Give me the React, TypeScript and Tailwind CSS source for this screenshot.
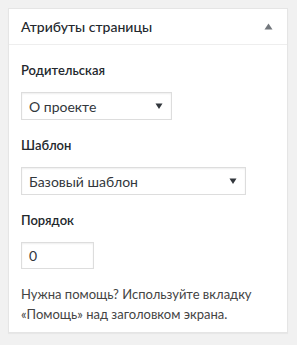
import { useState } from "react";

function FakeSelect({ value, width }: { value: string; width: string }) {
  return (
    <div
      className={`${width} h-[28px] flex items-center justify-between border border-[#ddd] bg-white pl-[7px] pr-[8px] text-[14px] text-[#32373c] shadow-[inset_0_1px_2px_rgba(0,0,0,0.07)]`}
    >
      <span>{value}</span>
      <svg width="8" height="8" viewBox="0 0 8 8" className="text-[#32373c]">
        <path d="M0.5 1.5 L7.5 1.5 L4 7 Z" fill="currentColor" />
      </svg>
    </div>
  );
}

export default function App() {
  const [open] = useState(true);

  return (
    <div className="w-[297px] h-[345px] bg-[#f1f1f1] pt-2 pl-2 pr-[9px] font-['Lato',sans-serif]">
      <div className="h-[325px] bg-white border border-[#e5e5e5] shadow-[0_1px_1px_rgba(0,0,0,0.04)]">
        <div className="h-[36px] flex items-center justify-between px-3 border-b border-[#eee]">
          <h2 className="text-[14px] text-[#23282d] font-medium">Атрибуты страницы</h2>
          <svg width="9" height="7" viewBox="0 0 9 7" className="text-[#72777c] mr-[2px]">
            <path d="M4.5 0.5 L8.5 6.5 L0.5 6.5 Z" fill="currentColor" />
          </svg>
        </div>
        {open && (
          <div className="px-3 pt-[15px] text-[13px] text-[#444]">
            <p className="h-[20px] leading-[20px] font-semibold text-[#23282d]">Родительская</p>
            <div className="mt-3">
              <FakeSelect value="О проекте" width="w-[151px]" />
            </div>
            <p className="mt-[15px] h-[20px] leading-[20px] font-semibold text-[#23282d]">Шаблон</p>
            <div className="mt-3">
              <FakeSelect value="Базовый шаблон" width="w-[225px]" />
            </div>
            <p className="mt-[15px] h-[20px] leading-[20px] font-semibold text-[#23282d]">Порядок</p>
            <div className="mt-3 w-[73px] h-[27px] flex items-center border border-[#ddd] bg-white px-[7px] text-[14px] text-[#32373c] shadow-[inset_0_1px_2px_rgba(0,0,0,0.07)]">
              0
            </div>
            <p className="mt-[15px] leading-[20px] text-[#444]">
              Нужна помощь? Используйте вкладку «Помощь» над заголовком экрана.
            </p>
          </div>
        )}
      </div>
    </div>
  );
}
